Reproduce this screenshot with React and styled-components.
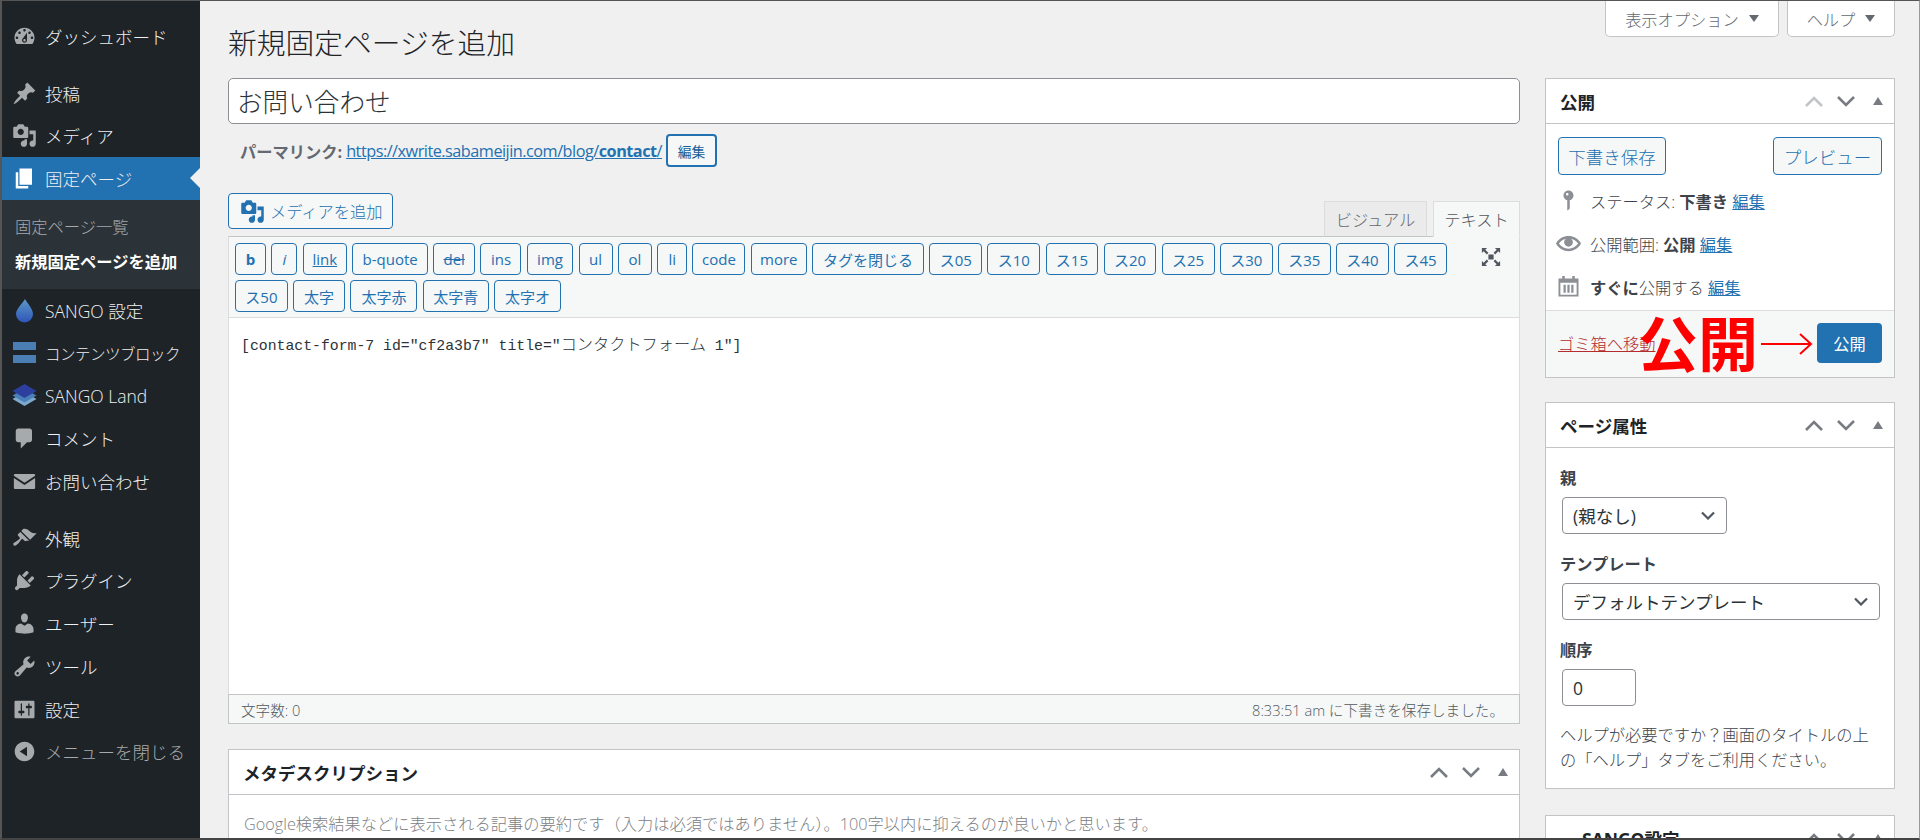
import React from 'react';
import styled, { createGlobalStyle } from 'styled-components';

const GlobalStyle = createGlobalStyle`
  html, body { margin: 0; padding: 0; height: 840px; overflow: hidden; }
  body {
    font-family: "Open Sans", "Noto Sans CJK JP", sans-serif;
    font-size: 16.25px;
    font-weight: 300;
    color: #3c434a;
    background: #f0f0f1;
  }
  strong { font-weight: 700; }
  * { box-sizing: border-box; }
`;

const paths = {
  dashboard: 'M3.76 16h12.48c1.1-1.37 1.76-3.11 1.76-5 0-4.42-3.58-8-8-8s-8 3.58-8 8c0 1.89.66 3.63 1.76 5zM10 4c.55 0 1 .45 1 1s-.45 1-1 1-1-.45-1-1 .45-1 1-1zM6 6c.55 0 1 .45 1 1s-.45 1-1 1-1-.45-1-1 .45-1 1-1zm8 0c.55 0 1 .45 1 1s-.45 1-1 1-1-.45-1-1 .45-1 1-1zm-5.37 5.55L12 7v6c0 1.1-.9 2-2 2s-2-.9-2-2c0-.57.24-1.08.63-1.45zM4 10c.55 0 1 .45 1 1s-.45 1-1 1-1-.45-1-1 .45-1 1-1zm12 0c.55 0 1 .45 1 1s-.45 1-1 1-1-.45-1-1 .45-1 1-1zm-5 3c0-.55-.45-1-1-1s-1 .45-1 1 .45 1 1 1 1-.45 1-1z',
  post: 'M10.44 3.02l1.82-1.82 6.36 6.35-1.83 1.82c-1.05-.68-2.48-.57-3.41.36l-.75.75c-.92.93-1.04 2.35-.35 3.41l-1.83 1.82-2.41-2.41-2.8 2.79c-.42.42-3.38 2.71-3.8 2.29s1.86-3.39 2.28-3.81l2.79-2.79L4.1 9.36l1.83-1.82c1.05.69 2.48.57 3.4-.36l.75-.75c.93-.92 1.05-2.35.36-3.41z',
  media: 'M13 11V4c0-.55-.45-1-1-1h-1.67L9 1H5L3.67 3H2c-.55 0-1 .45-1 1v7c0 .55.45 1 1 1h10c.55 0 1-.45 1-1zM7 4.5c1.38 0 2.5 1.12 2.5 2.5S8.38 9.5 7 9.5 4.5 8.38 4.5 7 5.62 4.5 7 4.5zM14 6h5v10.5c0 1.38-1.12 2.5-2.5 2.5S14 17.88 14 16.5s1.12-2.5 2.5-2.5c.17 0 .34.02.5.05V9h-3V6zm-4 8.05V13h2v3.5c0 1.38-1.12 2.5-2.5 2.5S7 17.88 7 16.5 8.12 14 9.5 14c.17 0 .34.02.5.05z',
  page: 'M6 15V2h10v13H6zm-1 1h8v2H3V5h2v11z',
  comment: 'M5 2h9c1.1 0 2 .9 2 2v7c0 1.1-.9 2-2 2h-2l-5 5v-5H5c-1.1 0-2-.9-2-2V4c0-1.1.9-2 2-2z',
  mail: 'M2.5 4h15c.5 0 1 .4 1 1v.4L10 11 1.5 5.400V5c0-.6.5-1 1-1zM1.500 7.200 10 12.800l8.500-5.600V15c0 .6-.5 1-1 1h-15c-.5 0-1-.4-1-1z',
  appearance: 'M14.48 11.06L7.41 3.99l1.5-1.5c.5-.56 2.3-.47 3.51.32 1.21.8 1.43 1.28 2.91 2.1 1.18.64 2.45 1.26 4.45.85zm-.71.71L6.7 4.7 4.93 6.47c-.39.39-.39 1.02 0 1.41l1.06 1.06c.39.39.39 1.03 0 1.42-.6.6-1.43 1.11-2.21 1.69-.35.26-.7.53-1.01.84C1.43 13.23.4 14.4 1.4 15.4s2.22-.04 3.59-1.4c.31-.31.58-.66.84-1.01.58-.78 1.09-1.61 1.69-2.21.39-.39 1.03-.39 1.42 0l1.06 1.06c.39.39 1.02.39 1.41 0z',
  plugin: 'M13.11 4.36L9.87 7.6 8 5.73l3.24-3.24c.35-.34 1.05-.2 1.56.32.52.51.66 1.21.31 1.55zm-8 1.77l.91-1.12 9.01 9.01-1.19.84c-.71.71-2.63 1.16-3.82 1.16H6.14L4.9 17.26c-.59.59-1.54.59-2.12 0-.59-.58-.59-1.53 0-2.12l1.24-1.24v-3.88c0-1.13.4-3.19 1.09-3.89zm7.26 3.97l3.24-3.24c.34-.35 1.04-.21 1.55.31.52.51.66 1.21.31 1.55l-3.24 3.25z',
  users: 'M10 9.25c-2.27 0-2.73-3.44-2.73-3.44C7 4.02 7.82 2 9.97 2c2.16 0 2.98 2.02 2.71 3.81 0 0-.41 3.44-2.68 3.44zm0 2.57L12.72 10c2.39 0 4.52 2.33 4.52 4.53v2.49s-3.65 1.13-7.24 1.13c-3.65 0-7.24-1.13-7.24-1.13v-2.49c0-2.25 1.94-4.48 4.47-4.48z',
  tools: 'M16.68 9.77c-1.34 1.34-3.3 1.67-4.95.99l-5.41 6.52c-.99.99-2.59.99-3.58 0s-.99-2.59 0-3.57l6.52-5.42c-.68-1.65-.35-3.61.99-4.95 1.28-1.28 3.12-1.62 4.72-1.06l-2.89 2.89 2.82 2.82 2.86-2.87c.53 1.58.18 3.39-1.08 4.65zM3.81 16.21c.4.39 1.04.39 1.43 0 .4-.4.4-1.04 0-1.43-.39-.4-1.03-.4-1.43 0-.39.39-.39 1.03 0 1.43z',
  settings: 'M18 16V4c0-.55-.45-1-1-1H3c-.55 0-1 .45-1 1v12c0 .55.45 1 1 1h14c.55 0 1-.45 1-1zM8 11h1c.55 0 1 .45 1 1s-.45 1-1 1H8v1.5c0 .28-.22.5-.5.5s-.5-.22-.5-.5V13H6c-.55 0-1-.45-1-1s.45-1 1-1h1V5.500c0-.28.22-.5.5-.5s.5.22.5.5V11zm5-2h-1c-.55 0-1-.45-1-1s.45-1 1-1h1V5.500c0-.28.22-.5.5-.5s.5.22.5.5V7h1c.55 0 1 .45 1 1s-.45 1-1 1h-1v5.500c0 .28-.22.5-.5.5s-.5-.22-.5-.5V9z',
  collapse: 'M10 2.160c4.330 0 7.840 3.510 7.840 7.840s-3.510 7.840-7.840 7.840S2.160 14.330 2.160 10 5.710 2.160 10 2.160zm2 11.720V6.120L6.180 9.970z',
  status: 'M14 6c0 1.860-1.280 3.410-3 3.860V16c0 1-2 2-2 2V9.860c-1.720-.45-3-2-3-3.860 0-2.210 1.790-4 4-4s4 1.790 4 4zM8 5c0 .55.45 1 1 1s1-.45 1-1-.45-1-1-1-1 .45-1 1z',
  eye: 'M19.700 9.400C17.700 6 14 3.900 10 3.900S2.300 6 .3 9.400L0 10l.3.6c2 3.400 5.700 5.500 9.700 5.500s7.700-2.100 9.700-5.500l.3-.6-.3-.6zM10 14.100c-3.100 0-6-1.600-7.700-4.100C3.600 8 5.700 6.600 8 6.100c-.9.6-1.500 1.700-1.500 2.900 0 1.900 1.600 3.500 3.500 3.500s3.500-1.600 3.500-3.500c0-1.200-.6-2.300-1.500-2.900 2.300.5 4.400 1.900 5.700 3.900-1.700 2.500-4.600 4.100-7.700 4.100z',
  calendar: 'M5 1.500h2v2h6v-2h2v2h3V18H2V3.500h3zM3.500 7v9.500h13V7zM6 8.500h1.800v6.500H6zm3.100 0h1.800v6.500H9.100zm3.100 0H14v6.500h-1.800z',
  fullscreen: 'M8 8h4v4H8zM3 3h4L5.600 4.400 8 6.800 6.800 8 4.400 5.600 3 7zM17 3v4l-1.400-1.400L13.200 8 12 6.800l2.400-2.400L13 3zM3 17v-4l1.400 1.400L6.800 12 8 13.200l-2.400 2.400L7 17zM17 17h-4l1.400-1.400L12 13.200l1.200-1.200 2.400 2.400L17 13z',
};

const Frame = styled.div`
  display: flex;
  width: 1920px;
  height: 840px;
  overflow: hidden;
  border-top: 1px solid #555;
  border-left: 2px solid #555;
  border-right: 1px solid #999;
  border-bottom: 2px solid #444;
`;

const Sidebar = styled.nav`
  flex: 0 0 198px;
  min-width: 0;
  background: #1d2327;
  padding-top: 14px;
`;

const MenuItem = styled.a`
  position: relative;
  display: flex;
  align-items: center;
  height: 42.75px;
  margin-top: ${(p) => (p.$sep ? '14px' : '0')};
  padding-left: 10px;
  gap: 8px;
  color: ${(p) => (p.$dim ? '#a7aaad' : '#f0f0f1')};
  background: ${(p) => (p.$current ? '#2271b1' : 'transparent')};
  font-size: ${(p) => (p.$tight ? '15.5px' : '17.5px')};
  letter-spacing: ${(p) => (p.$tight ? '-0.5px' : 'normal')};
  white-space: nowrap;
`;

const MenuIcon = styled.svg`
  flex: 0 0 25px;
  width: 25px;
  height: 25px;
  fill: ${(p) => (p.$current ? '#fff' : '#a7aaad')};
`;

const CurrentArrow = styled.span`
  position: absolute;
  right: 0;
  top: 11px;
  border: 10px solid transparent;
  border-right-color: #f0f0f1;
  border-left-width: 0;
`;

const SubMenu = styled.div`
  background: #2c3338;
  padding: 8px 0 0 13px;
  height: 89px;
`;

const SubItem = styled.a`
  display: flex;
  align-items: center;
  height: 35px;
  font-size: 16.25px;
  color: ${(p) => (p.$active ? '#fff' : '#a7aaad')};
  font-weight: ${(p) => (p.$active ? 700 : 300)};
`;

const Main = styled.main`
  flex: 1;
  display: flex;
  gap: 25px;
  padding: 0 24px 0 28px;
  min-width: 0;
  overflow: hidden;
`;

const LeftColumn = styled.div`
  flex: 0 0 1292px;
`;

const RightColumn = styled.div`
  flex: 0 0 349px;
`;

const PageTitle = styled.h1`
  margin: 0 0 17px;
  padding-top: 24px;
  font-size: 28.75px;
  line-height: 36px;
  font-weight: 300;
  color: #1d2327;
`;

const TitleInput = styled.div`
  height: 46px;
  padding: 0 8px;
  display: flex;
  align-items: center;
  background: #fff;
  border: 1px solid #8c8f94;
  border-radius: 5px;
  font-size: 25.6px;
  color: #2c3338;
`;

const PermalinkRow = styled.div`
  display: flex;
  align-items: center;
  height: 33px;
  margin-top: 10px;
  padding-left: 12px;
  gap: 4px;
`;

const PermalinkLabel = styled.strong`
  color: #646970;
  font-size: 16.25px;
`;

const TextLink = styled.a`
  color: #2271b1;
  text-decoration: underline;
  font-size: 16.25px;
  font-weight: 400;
  letter-spacing: ${(p) => p.$spacing || 'normal'};
`;

const EditButton = styled.button`
  width: 51px;
  height: 33px;
  padding: 0;
  font: inherit;
  font-size: 13.75px;
  font-weight: 400;
  color: #135e96;
  background: #f6f7f7;
  border: 2px solid #2271b1;
  border-radius: 4px;
`;

const EditorHead = styled.div`
  display: flex;
  justify-content: space-between;
  align-items: flex-end;
  margin-top: 26px;
  height: 43px;
`;

const MediaButton = styled.button`
  align-self: flex-start;
  display: flex;
  align-items: center;
  gap: 5px;
  width: 165px;
  height: 36px;
  padding: 0 0 0 11px;
  font: inherit;
  color: #2271b1;
  background: #f6f7f7;
  border: 1px solid #2271b1;
  border-radius: 4px;
`;

const Tabs = styled.div`
  display: flex;
  gap: 6px;
  margin-bottom: -1px;
`;

const Tab = styled.div`
  display: flex;
  align-items: center;
  justify-content: center;
  width: ${(p) => p.$w}px;
  height: 36px;
  font-size: 16.25px;
  color: ${(p) => (p.$active ? '#50575e' : '#646970')};
  background: ${(p) => (p.$active ? '#f6f7f7' : '#ebebeb')};
  border: 1px solid #dcdcde;
  border-bottom-color: ${(p) => (p.$active ? '#f6f7f7' : '#c3c4c7')};
  position: relative;
`;

const Toolbar = styled.div`
  display: flex;
  justify-content: space-between;
  height: 82px;
  padding: 6px 15px 0 6px;
  background: #f6f7f7;
  border: 1px solid #c3c4c7;
  border-color: #c3c4c7 #dcdcde #dcdcde #dcdcde;
`;

const ToolButtons = styled.div`
  display: flex;
  flex-wrap: wrap;
  align-content: flex-start;
  gap: 5px 5.3px;
  width: 1235px;
`;

const ToolButton = styled.button`
  width: ${(p) => p.$w}px;
  height: 32px;
  padding: 0;
  font-family: inherit;
  font-size: 15px;
  font-weight: ${(p) => (p.$bold ? 700 : 400)};
  font-style: ${(p) => (p.$italic ? 'italic' : 'normal')};
  text-decoration: ${(p) => p.$deco || 'none'};
  color: #2271b1;
  background: #f6f7f7;
  border: 1px solid #2271b1;
  border-radius: 4px;
`;

const FullscreenIcon = styled.svg`
  width: 26px;
  height: 26px;
  margin-top: 1px;
  fill: #50575e;
`;

const EditorBody = styled.div`
  height: 376px;
  padding: 15px 12px;
  background: #fff;
  border: solid #dcdcde;
  border-width: 0 1px;
  font-family: "Liberation Mono", "Noto Sans CJK JP", monospace;
  font-size: 14.8px;
  font-weight: 400;
  line-height: 20px;
  color: #2c3338;
  white-space: pre;
`;

const CodeKana = styled.span`
  font-family: "Noto Sans CJK JP", sans-serif;
  font-size: 16.2px;
  font-weight: 300;
`;

const StatusBar = styled.div`
  display: flex;
  justify-content: space-between;
  align-items: center;
  height: 30px;
  padding: 0 15px 0 12px;
  background: #f6f7f7;
  border: 1px solid #c3c4c7;
  font-size: 14.6px;
  color: #50575e;
`;

const Box = styled.section`
  margin-top: ${(p) => p.$top || 0}px;
  background: #fff;
  border: 1px solid #c3c4c7;
`;

const BoxHeader = styled.header`
  display: flex;
  align-items: center;
  justify-content: space-between;
  height: 45px;
  padding-left: ${(p) => p.$indent || 14}px;
  border-bottom: 1px solid #c3c4c7;
`;

const BoxTitle = styled.h2`
  margin: 0;
  font-size: 17.5px;
  font-weight: 700;
  color: #1d2327;
`;

const BoxControls = styled.div`
  display: flex;
  flex: 0 0 auto;
`;

const ControlCell = styled.span`
  display: flex;
  align-items: center;
  justify-content: center;
  width: 32px;
  height: 32px;
`;

const MetaText = styled.p`
  margin: 0;
  padding: 17px 15px;
  font-size: 16.25px;
  line-height: 25px;
  color: #7c8186;
  white-space: nowrap;
`;

const ScreenTabs = styled.div`
  display: flex;
  justify-content: flex-end;
  gap: 8px;
  height: 36px;
  margin-bottom: 41px;
`;

const ScreenTab = styled.div`
  display: flex;
  align-items: center;
  justify-content: center;
  gap: 10px;
  width: ${(p) => p.$w}px;
  height: 36px;
  font-size: 16.25px;
  color: #646970;
  background: #fff;
  border: 1px solid #c3c4c7;
  border-top: 0;
  border-radius: 0 0 5px 5px;
`;

const MiniTriangle = styled.span`
  border: 5px solid transparent;
  border-top: 7px solid #646970;
  border-bottom: 0;
`;

const PublishActions = styled.div`
  display: flex;
  justify-content: space-between;
  padding: 13px 12px 0;
`;

const GhostButton = styled.button`
  width: ${(p) => p.$w}px;
  height: 38px;
  padding: 0;
  font: inherit;
  font-size: 17.5px;
  color: #2271b1;
  background: #f6f7f7;
  border: 1px solid #2271b1;
  border-radius: 4px;
`;

const StatusRows = styled.div`
  padding: 4px 0 2px;
`;

const StatusRow = styled.div`
  display: flex;
  align-items: center;
  gap: 9px;
  height: 43px;
  padding-left: 10px;
`;

const StatusIcon = styled.svg`
  flex: 0 0 25px;
  width: 25px;
  height: 25px;
  fill: #8c8f94;
`;

const PublishFooter = styled.div`
  position: relative;
  display: flex;
  justify-content: space-between;
  align-items: center;
  height: 67px;
  padding: 0 12px 2px;
  background: #f6f7f7;
  border-top: 1px solid #dcdcde;
`;

const TrashLink = styled.a`
  color: #b32d2e;
  text-decoration: underline;
  font-size: 16.25px;
`;

const PublishButton = styled.button`
  width: 65px;
  height: 40px;
  padding: 0;
  font: inherit;
  font-weight: 400;
  color: #fff;
  background: #2271b1;
  border: 0;
  border-radius: 4px;
`;

const Annotation = styled.div`
  position: absolute;
  left: 92px;
  top: -4px;
  display: flex;
  align-items: center;
  gap: 3px;
  color: #f00;
  font-family: "Noto Sans CJK JP", sans-serif;
  font-size: 60px;
  line-height: 67px;
  font-weight: 700;
`;

const ArrowIcon = styled.svg`
  width: 52px;
  height: 24px;
  margin-top: 6px;
`;

const AttrBody = styled.div`
  padding: 20px 14px 15px;
`;

const AttrLabel = styled.div`
  height: 20px;
  line-height: 20px;
  margin-top: ${(p) => (p.$first ? 0 : 20)}px;
  margin-bottom: 9px;
  font-weight: 700;
`;

const Field = styled.div`
  display: flex;
  align-items: center;
  justify-content: space-between;
  width: ${(p) => p.$w}px;
  height: 37px;
  margin-left: 2px;
  padding: 0 11px 0 10px;
  font-size: 17.5px;
  font-weight: 400;
  color: #2c3338;
  background: #fff;
  border: 1px solid #8c8f94;
  border-radius: 4px;
`;

const HelpText = styled.p`
  margin: 17px 0 0;
  line-height: 25px;
  white-space: nowrap;
`;

const menuTop = [
  { icon: 'post', label: '投稿', sep: true },
  { icon: 'media', label: 'メディア' },
];

const menuBottom = [
  { icon: 'comment', label: 'コメント' },
  { icon: 'mail', label: 'お問い合わせ' },
  { icon: 'appearance', label: '外観', sep: true },
  { icon: 'plugin', label: 'プラグイン' },
  { icon: 'users', label: 'ユーザー' },
  { icon: 'tools', label: 'ツール' },
  { icon: 'settings', label: '設定' },
  { icon: 'collapse', label: 'メニューを閉じる', dim: true },
];

const toolButtons = [
  { label: 'b', w: 31, bold: true },
  { label: 'i', w: 26, italic: true },
  { label: 'link', w: 44.5, deco: 'underline' },
  { label: 'b-quote', w: 75.5 },
  { label: 'del', w: 42, deco: 'line-through' },
  { label: 'ins', w: 41 },
  { label: 'img', w: 46.5 },
  { label: 'ul', w: 34 },
  { label: 'ol', w: 34 },
  { label: 'li', w: 30 },
  { label: 'code', w: 53 },
  { label: 'more', w: 56 },
  { label: 'タグを閉じる', w: 112 },
  ...['05', '10', '15', '20', '25', '30', '35', '40', '45', '50'].map((n) => ({ label: `ス${n}`, w: 52.8 })),
  { label: '太字', w: 52 },
  { label: '太字赤', w: 67 },
  { label: '太字青', w: 66 },
  { label: '太字オ', w: 67 },
];

function Dash({ as: Comp, name, ...rest }) {
  return (
    <Comp viewBox="0 0 20 20" {...rest}>
      <path fillRule="evenodd" d={paths[name]} />
    </Comp>
  );
}

function Controls({ dimUp }) {
  return (
    <BoxControls>
      <ControlCell>
        <svg width="18" height="11" viewBox="0 0 18 11" fill="none" stroke={dimUp ? '#c3c4c7' : '#787c82'} strokeWidth="2.600">
          <path d="M1 10l8-8 8 8" />
        </svg>
      </ControlCell>
      <ControlCell>
        <svg width="18" height="11" viewBox="0 0 18 11" fill="none" stroke="#787c82" strokeWidth="2.600">
          <path d="M1 1l8 8 8-8" />
        </svg>
      </ControlCell>
      <ControlCell>
        <svg width="10" height="8" viewBox="0 0 10 8" fill="#787c82">
          <path d="M5 0l5 8H0z" />
        </svg>
      </ControlCell>
    </BoxControls>
  );
}

function Chevron() {
  return (
    <svg width="14" height="9" viewBox="0 0 14 9" fill="none" stroke="#50575e" strokeWidth="2.200">
      <path d="M1 1.500l6 6 6-6" />
    </svg>
  );
}

function SangoDrop() {
  return (
    <MenuIcon viewBox="0 0 25 25">
      <defs>
        <linearGradient id="drop" x1="0" y1="0" x2="0" y2="1">
          <stop offset="0" stopColor="#5b9ac9" />
          <stop offset="1" stopColor="#2f55b8" />
        </linearGradient>
      </defs>
      <path fill="url(#drop)" d="M13 1c2 4 8 9.500 8 15a8.500 8.500 0 0 1-17 0c0-5.500 7-11 9-15z" />
    </MenuIcon>
  );
}

function SangoBars() {
  return (
    <MenuIcon viewBox="0 0 25 25">
      <path fill="#4b7fb3" d="M1 1h23v8H1zM1 14h23v8H1z" />
    </MenuIcon>
  );
}

function SangoLand() {
  return (
    <MenuIcon viewBox="0 0 25 25">
      <path fill="#7fa9cc" d="M12.500 9l12 7-12 7-12-7z" />
      <path fill="#4a80b8" d="M12.500 5.500l12 7-12 7-12-7z" />
      <path fill="#2c3f9e" d="M12.500 1l12 7-12 7-12-7z" />
    </MenuIcon>
  );
}

export default function App() {
  return (
    <>
      <GlobalStyle />
      <Frame>
        <Sidebar>
          <MenuItem>
            <Dash as={MenuIcon} name="dashboard" />
            ダッシュボード
          </MenuItem>
          {menuTop.map((m) => (
            <MenuItem key={m.label} $sep={m.sep}>
              <Dash as={MenuIcon} name={m.icon} />
              {m.label}
            </MenuItem>
          ))}
          <MenuItem $current>
            <Dash as={MenuIcon} name="page" $current />
            固定ページ
            <CurrentArrow />
          </MenuItem>
          <SubMenu>
            <SubItem>固定ページ一覧</SubItem>
            <SubItem $active>新規固定ページを追加</SubItem>
          </SubMenu>
          <MenuItem>
            <SangoDrop />
            SANGO 設定
          </MenuItem>
          <MenuItem $tight>
            <SangoBars />
            コンテンツブロック
          </MenuItem>
          <MenuItem>
            <SangoLand />
            SANGO Land
          </MenuItem>
          {menuBottom.map((m) => (
            <MenuItem key={m.label} $sep={m.sep} $dim={m.dim}>
              <Dash as={MenuIcon} name={m.icon} />
              {m.label}
            </MenuItem>
          ))}
        </Sidebar>

        <Main>
          <LeftColumn>
            <PageTitle>新規固定ページを追加</PageTitle>
            <TitleInput>お問い合わせ</TitleInput>
            <PermalinkRow>
              <PermalinkLabel>パーマリンク:</PermalinkLabel>
              <TextLink $spacing="-0.5px">
                https://xwrite.sabameijin.com/blog/<strong>contact</strong>/
              </TextLink>
              <EditButton>編集</EditButton>
            </PermalinkRow>

            <EditorHead>
              <MediaButton>
                <svg width="25" height="25" viewBox="0 0 20 20" fill="#2271b1">
                  <path fillRule="evenodd" d={paths.media} />
                </svg>
                メディアを追加
              </MediaButton>
              <Tabs>
                <Tab $w={103}>ビジュアル</Tab>
                <Tab $w={87} $active>テキスト</Tab>
              </Tabs>
            </EditorHead>
            <Toolbar>
              <ToolButtons>
                {toolButtons.map((b) => (
                  <ToolButton key={b.label} $w={b.w} $bold={b.bold} $italic={b.italic} $deco={b.deco}>
                    {b.label}
                  </ToolButton>
                ))}
              </ToolButtons>
              <Dash as={FullscreenIcon} name="fullscreen" />
            </Toolbar>
            <EditorBody>
              [contact-form-7 id="cf2a3b7" title="<CodeKana>コンタクトフォーム</CodeKana> 1"]
            </EditorBody>
            <StatusBar>
              <span>文字数: 0</span>
              <span>8:33:51 am に下書きを保存しました。</span>
            </StatusBar>

            <Box $top={25}>
              <BoxHeader>
                <BoxTitle>メタデスクリプション</BoxTitle>
                <Controls />
              </BoxHeader>
              <MetaText>
                Google検索結果などに表示される記事の要約です（入力は必須ではありません）。100字以内に抑えるのが良いかと思います。
              </MetaText>
            </Box>
          </LeftColumn>

          <RightColumn>
            <ScreenTabs>
              <ScreenTab $w={174}>
                表示オプション
                <MiniTriangle />
              </ScreenTab>
              <ScreenTab $w={108}>
                ヘルプ
                <MiniTriangle />
              </ScreenTab>
            </ScreenTabs>

            <Box>
              <BoxHeader>
                <BoxTitle>公開</BoxTitle>
                <Controls dimUp />
              </BoxHeader>
              <PublishActions>
                <GhostButton $w={108}>下書き保存</GhostButton>
                <GhostButton $w={109}>プレビュー</GhostButton>
              </PublishActions>
              <StatusRows>
                <StatusRow>
                  <Dash as={StatusIcon} name="status" />
                  <span>
                    ステータス: <strong>下書き</strong> <TextLink>編集</TextLink>
                  </span>
                </StatusRow>
                <StatusRow>
                  <Dash as={StatusIcon} name="eye" />
                  <span>
                    公開範囲: <strong>公開</strong> <TextLink>編集</TextLink>
                  </span>
                </StatusRow>
                <StatusRow>
                  <Dash as={StatusIcon} name="calendar" />
                  <span>
                    <strong>すぐに</strong>公開する <TextLink>編集</TextLink>
                  </span>
                </StatusRow>
              </StatusRows>
              <PublishFooter>
                <TrashLink>ゴミ箱へ移動</TrashLink>
                <PublishButton>公開</PublishButton>
                <Annotation>
                  公開
                  <ArrowIcon viewBox="0 0 52 24" fill="none" stroke="#f00" strokeWidth="2">
                    <path d="M0 12h50M39 2l11 10-11 10" />
                  </ArrowIcon>
                </Annotation>
              </PublishFooter>
            </Box>

            <Box $top={24}>
              <BoxHeader>
                <BoxTitle>ページ属性</BoxTitle>
                <Controls />
              </BoxHeader>
              <AttrBody>
                <AttrLabel $first>親</AttrLabel>
                <Field $w={165}>
                  (親なし)
                  <Chevron />
                </Field>
                <AttrLabel>テンプレート</AttrLabel>
                <Field $w={318}>
                  デフォルトテンプレート
                  <Chevron />
                </Field>
                <AttrLabel>順序</AttrLabel>
                <Field $w={74}>0</Field>
                <HelpText>
                  ヘルプが必要ですか？画面のタイトルの上
                  <br />
                  の「ヘルプ」タブをご利用ください。
                </HelpText>
              </AttrBody>
            </Box>

            <Box $top={26}>
              <BoxHeader $indent={36}>
                <BoxTitle>SANGO設定</BoxTitle>
                <Controls />
              </BoxHeader>
            </Box>
          </RightColumn>
        </Main>
      </Frame>
    </>
  );
}
